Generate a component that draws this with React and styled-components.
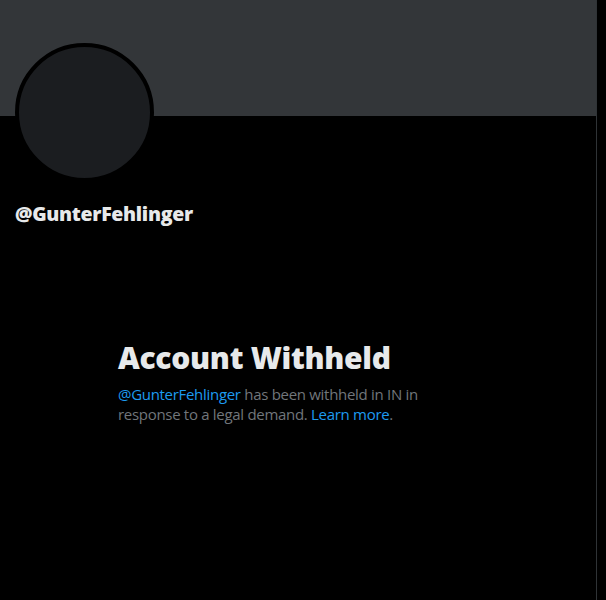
import styled, { createGlobalStyle } from 'styled-components'

const Global = createGlobalStyle`
  html, body {
    margin: 0;
    background: #000;
  }
  body {
    font-family: "Open Sans", "Noto Sans", sans-serif;
    -webkit-font-smoothing: antialiased;
  }
`

export default function App(){
  return (<Page>
    <Global/>
    <Column>
      <Banner/>
      <HeaderRow>
        <Avatar/>
      </HeaderRow>
      <Handle>@GunterFehlinger</Handle>
      <Empty>
        <Title>Account Withheld</Title>
        <Message>
          <Link>@GunterFehlinger</Link> has been withheld in IN in response to a legal demand. <Link>Learn more</Link>.
        </Message>
      </Empty>
    </Column>
  </Page>
  )
}

const Page = styled.div`
  display: flex;
  min-height: 600px;
  background: #000;
`
const Column = styled.main`
  width: 596px;
  min-height: 600px;
  border-right: 1px solid #2f3336;
`
const Banner = styled.div`
  height: 116px;
  background: #333639;
`
const HeaderRow = styled.div`
  display: flex;
  padding: 0 15px;
`
const Avatar = styled.div`
  width: 131px;
  height: 131px;
  margin-top: -73px;
  border-radius: 50%;
  border: 4px solid #000;
  background: #1b1d20;
`
const Handle = styled.div`
  padding: 20px 15px 0;
  color: #e7e9ea;
  font-size: 19.5px;
  font-weight: 800;
  letter-spacing: -0.3px;
  line-height: 24px;
`
const Empty = styled.div`
  max-width: 360px;
  margin: 0 auto;
  padding: 114px 20px 0;
`
const Title = styled.h2`
  margin: 0 0 8px;
  color: #e7e9ea;
  font-size: 30px;
  font-weight: 800;
  letter-spacing: -0.3px;
  line-height: 36px;
`
const Message = styled.p`
  margin: 0;
  max-width: 302px;
  color: #71767b;
  font-size: 15px;
  letter-spacing: -0.3px;
  line-height: 20px;
`
const Link = styled.span`
  color: #1d9bf0;
`
